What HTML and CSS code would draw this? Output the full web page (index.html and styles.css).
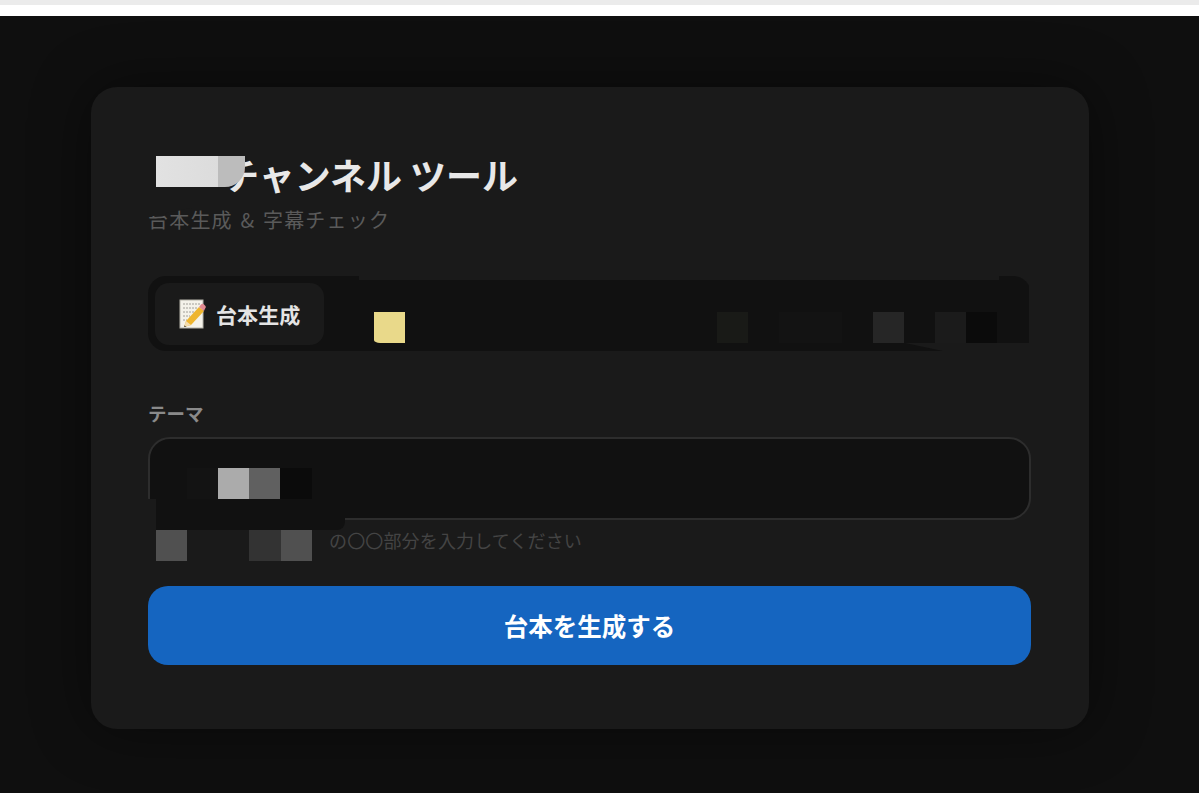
FILE: index.html
```html
<!DOCTYPE html>
<html lang="ja">
<head>
    <meta charset="UTF-8">
    <meta name="viewport" content="width=device-width, initial-scale=1.0">
    <title>チャンネル ツール</title>
    <link rel="stylesheet" href="styles.css">
</head>
<body>
    <div class="browser-strip"></div>
    <main class="page">
        <section class="card">
            <h1 class="title">チャンネル ツール</h1>
            <p class="subtitle">台本生成 &amp; 字幕チェック</p>

            <div class="tabs">
                <button class="tab" type="button">
                    <svg class="tab-icon" viewBox="0 0 28 30" aria-hidden="true">
                        <rect x="1" y="1" width="23" height="28" fill="#f4f2ea" stroke="#b5b3aa" stroke-width="1"/>
                        <path d="M4 5h17M4 9h15M4 13h11M4 17h7M4 21h4" stroke="#8d8c85" stroke-width=".8" stroke-dasharray="2 1"/>
                        <path d="M7 22 20 8l5 4-13 14-7 2z" fill="#eeb52f"/>
                        <path d="M20 8l2-2.500c1-1 2-1 3 0l1.500 1.500c.5 1 .4 1.800-.4 2.600L25 12z" fill="#e28a92"/>
                        <path d="M7 22l5 4-7 2z" fill="#f3dcae"/>
                        <path d="M5 26.500 5.500 28 7.500 27.400z" fill="#333"/>
                    </svg>
                    台本生成
                </button>
            </div>

            <label class="field-label" for="theme">テーマ</label>
            <input class="field-input" id="theme" type="text">
            <p class="hint">の〇〇部分を入力してください</p>

            <button class="submit" type="button">台本を生成する</button>

            <!-- ぼかし部分 -->
            <div class="mosaic mosaic-title">
                <span class="tile tile-wide tile-white"></span>
                <span class="tile tile-fade"></span>
            </div>
            <div class="smear smear-subtitle"></div>
            <div class="smear smear-tabs-top"></div>
            <div class="smear smear-tabs-end"></div>
            <div class="smear smear-tabs-side"></div>
            <div class="smear smear-tabs-corner"></div>
            <div class="mosaic mosaic-tabs-a"><span class="tile tile-yellow"></span></div>
            <div class="mosaic mosaic-tabs-b">
                <span class="tile tile-olive"></span>
                <span class="tile tile-gap"></span>
                <span class="tile tile-wide tile-ink"></span>
                <span class="tile tile-gap"></span>
                <span class="tile tile-soft"></span>
                <span class="tile tile-gap"></span>
                <span class="tile tile-dim"></span>
                <span class="tile tile-black"></span>
            </div>
            <div class="mosaic mosaic-input">
                <span class="tile tile-ink"></span>
                <span class="tile tile-silver"></span>
                <span class="tile tile-grey"></span>
                <span class="tile tile-black"></span>
            </div>
            <div class="smear smear-input"></div>
            <div class="mosaic mosaic-hint">
                <span class="tile tile-mid"></span>
                <span class="tile tile-gap"></span>
                <span class="tile tile-gap"></span>
                <span class="tile tile-char"></span>
                <span class="tile tile-mid"></span>
            </div>
        </section>
    </main>
</body>
</html>
```

FILE: styles.css
```css
* {
    box-sizing: border-box;
}

html, body {
    height: 100%;
}

body {
    margin: 0;
    overflow: hidden;
    background-color: #0f0f0f;
    font-family: "Noto Sans CJK JP", "Noto Sans", sans-serif;
}

.browser-strip {
    height: 16px;
    background-color: #fff;
    border-top: 5px solid #ebebeb;
}

.page {
    padding: 71px 110px 64px 91px;
}

.card {
    position: relative;
    height: 642px;
    padding: 64px 58px 64px 57px;
    background-color: #1a1a1a;
    border-radius: 26px;
    box-shadow: 0 0 60px rgba(0, 0, 0, 0.45);
}

.title {
    margin: 0;
    padding-left: 75px;
    height: 48px;
    font-size: 36px;
    font-weight: 700;
    line-height: 46px;
    color: #e8e8e8;
}

.subtitle {
    margin: 9px 0 0;
    height: 24px;
    font-size: 20px;
    line-height: 24px;
    letter-spacing: 1.2px;
    word-spacing: 2px;
    color: #5a5a5a;
}

.tabs {
    display: flex;
    margin-top: 44px;
    height: 75px;
    padding: 7px 6px 6px 7px;
    background-color: #111;
    border-radius: 18px;
}

.tab {
    display: flex;
    align-items: center;
    gap: 9px;
    width: 169px;
    padding: 0 0 0 24px;
    border: none;
    border-radius: 14px;
    background-color: #1a1a1a;
    font-family: inherit;
    font-size: 21px;
    font-weight: 700;
    letter-spacing: .1px;
    color: #e4e4e4;
}

.tab-icon {
    width: 28px;
    height: 30px;
    flex-shrink: 0;
}

.field-label {
    display: block;
    margin-top: 49px;
    height: 26px;
    font-size: 18.500px;
    font-weight: 700;
    line-height: 26px;
    color: #8a8a8a;
}

.field-input {
    display: block;
    width: 100%;
    height: 83px;
    margin-top: 11px;
    background-color: #111;
    border: 2px solid #2d2d2d;
    border-radius: 22px;
}

.hint {
    margin: 7px 0 0;
    height: 26px;
    padding-left: 181px;
    font-size: 18px;
    line-height: 26px;
    letter-spacing: .15px;
    color: #444;
}

.submit {
    display: block;
    width: 100%;
    height: 79px;
    margin-top: 33px;
    border: none;
    border-radius: 20px;
    background-color: #1565c0;
    font-family: inherit;
    font-size: 24.500px;
    font-weight: 700;
    color: #fff;
}

/* ぼかし部分 */
.mosaic {
    position: absolute;
    display: flex;
}

.tile {
    width: 31.150px;
    height: 31px;
    flex-shrink: 0;
}

.tile-wide { width: 62.300px; }
.tile-gap { background-color: transparent; }
.tile-white { background: linear-gradient(90deg, #e2e2e2, #dcdcdc); }
.tile-fade {
    width: 27px;
    background-color: #bcbcbc;
    border-bottom-right-radius: 20px;
}
.tile-yellow {
    background-color: #e9d98a;
    border-bottom-left-radius: 6px 3px;
}
.tile-olive { background-color: #191a17; }
.tile-ink { background-color: #131313; }
.tile-soft { background-color: #262626; }
.tile-dim { background-color: #1b1b1b; }
.tile-black { background-color: #0b0b0b; }
.tile-silver { background-color: #ababab; }
.tile-grey { background-color: #606060; }
.tile-mid { background-color: #505050; }
.tile-char { background-color: #333; }

.mosaic-title { left: 65px; top: 69px; }
.mosaic-tabs-a { left: 283px; top: 225px; }
.mosaic-tabs-b { left: 626px; top: 225px; }
.mosaic-input { left: 96px; top: 381px; }
.mosaic-hint { left: 65px; top: 443px; }

.smear {
    position: absolute;
}

.smear-subtitle {
    left: 55px;
    top: 120px;
    width: 46px;
    height: 9px;
    background-color: #1a1a1a;
    clip-path: polygon(0 0, 100% 0, 100% 10%, 45% 60%, 40% 100%, 0 100%);
}

.smear-tabs-top {
    left: 268px;
    top: 189px;
    width: 640px;
    height: 4px;
    background-color: #1a1a1a;
}

.smear-tabs-end {
    left: 814px;
    top: 256px;
    width: 126px;
    height: 8px;
    background-color: #1a1a1a;
    clip-path: polygon(0 0, 100% 0, 100% 100%, 30% 100%);
}

.smear-tabs-side {
    left: 938px;
    top: 189px;
    width: 2px;
    height: 75px;
    background-color: #1a1a1a;
}

.smear-tabs-corner {
    left: 920px;
    top: 240px;
    width: 18px;
    height: 16px;
    background-color: #111;
}

.smear-input {
    left: 57px;
    top: 412px;
    width: 197px;
    height: 31px;
    background-color: #111;
    border-bottom-right-radius: 8px;
    box-shadow: inset 8px 0 0 #1a1a1a;
}
```
